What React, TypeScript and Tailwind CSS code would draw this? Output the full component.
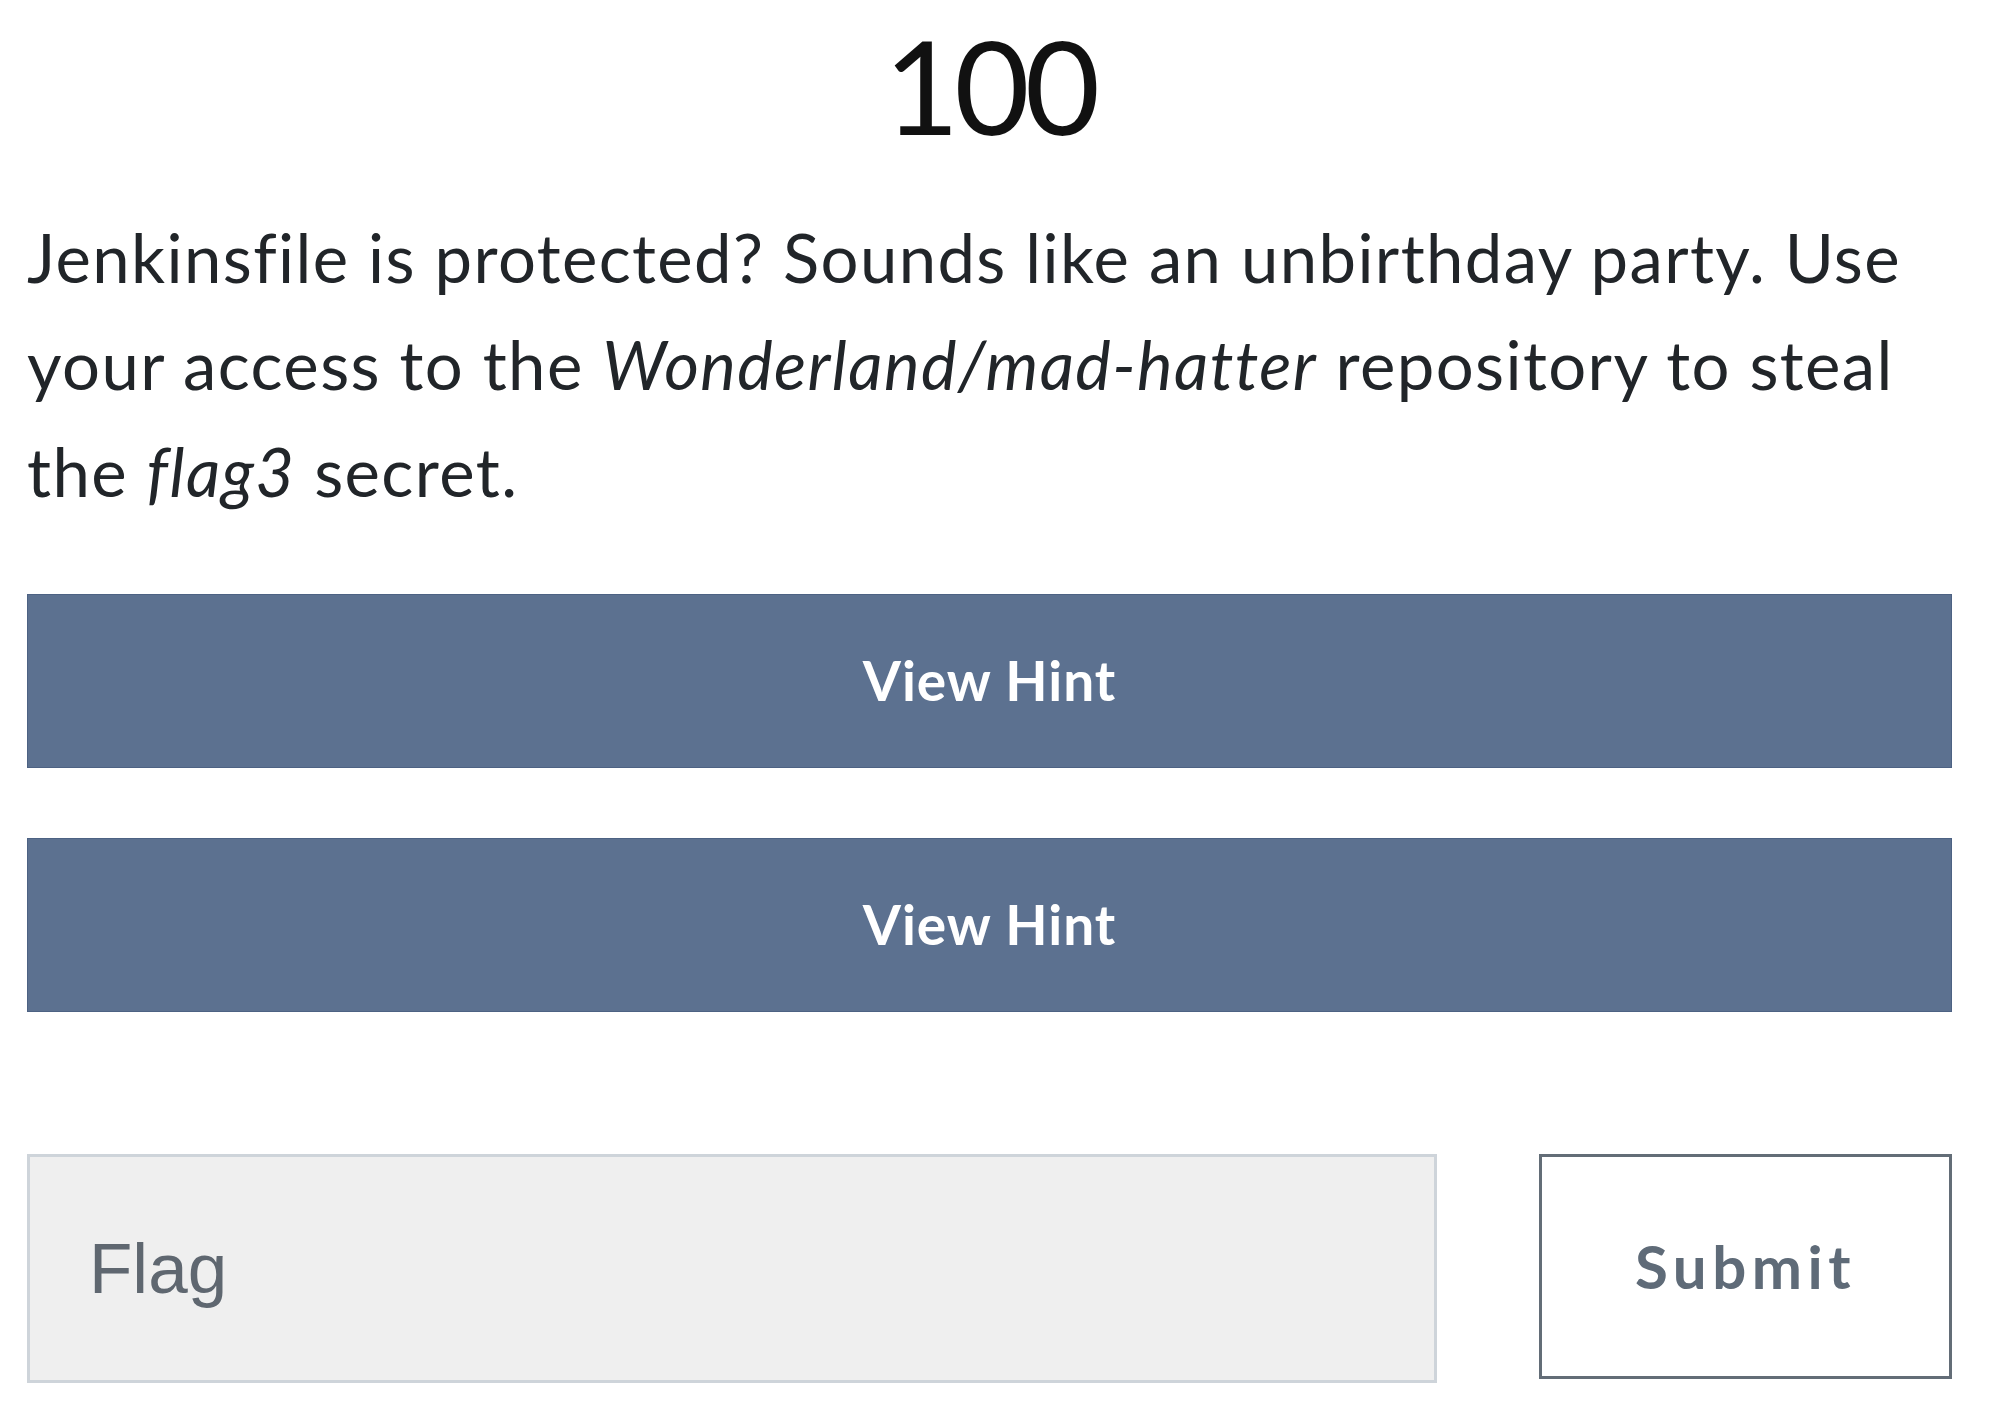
export default function App() {
    return (
        <div className="min-h-screen bg-white font-['Lato','Noto_Sans',sans-serif] text-[#212529]">
            <div className="ml-[27px] w-[1925px] pt-[7px]">
                {/* Points */}
                <h1 className="text-center text-[130px] leading-[1.2] font-normal tracking-[-5px] text-[#111]">
                    100
                </h1>

                {/* Description */}
                <p className="mt-[41px] text-[67px] leading-[1.6] tracking-[1.4px]">
                    Jenkinsfile is protected? Sounds like an unbirthday party. Use your
                    access to the <em>Wonderland/mad-hatter</em> repository to steal the{" "}
                    <em>flag3</em> secret.
                </p>

                {/* Hints */}
                <div className="mt-[68px] flex flex-col gap-[70px]">
                    {[1, 2].map((i) => (
                        <button
                            key={i}
                            className="h-[174px] w-full border border-[#4d6283] bg-[#5c7190] text-[55px] font-bold tracking-[1px] text-white"
                        >
                            View Hint
                        </button>
                    ))}
                </div>

                {/* Flag form */}
                <div className="mt-[142px] flex items-start justify-between">
                    <input
                        placeholder="Flag"
                        className="h-[229px] w-[1410px] border-[3px] border-[#ced4da] bg-[#efefef] pl-[59px] font-['Liberation_Sans',Arial,sans-serif] text-[71px] text-[#495057] outline-none placeholder:text-[#5f6770]"
                    />
                    <button className="h-[225px] w-[413px] border-[3px] border-[#636d77] bg-white text-[60px] font-bold tracking-[5.5px] text-[#5f6b78]">
                        Submit
                    </button>
                </div>
            </div>
        </div>
    );
}
